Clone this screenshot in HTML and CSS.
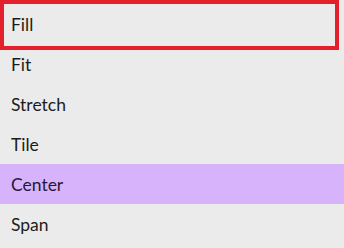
FILE: index.html
```html
<!DOCTYPE html>
<html>
<head>
<meta charset="utf-8">
<link rel="stylesheet" href="styles.css">
</head>
<body>
<ul class="menu">
  <li class="item focused">Fill</li>
  <li class="item">Fit</li>
  <li class="item">Stretch</li>
  <li class="item">Tile</li>
  <li class="item selected">Center</li>
  <li class="item">Span</li>
</ul>
</body>
</html>
```
FILE: styles.css
```css
html, body {
  margin: 0;
  padding: 0;
  background: #ebebeb;
  width: 344px;
  height: 248px;
  overflow: hidden;
}
.menu {
  list-style: none;
  margin: 0;
  padding: 4px 0 0 0;
  display: flex;
  flex-direction: column;
}
.item {
  position: relative;
  height: 40px;
  box-sizing: border-box;
  padding: 0 0 0 11px;
  display: flex;
  align-items: center;
  font-family: Lato, "Noto Sans", sans-serif;
  font-size: 17.5px;
  color: #1c1c1c;
}
.focused::after {
  content: "";
  position: absolute;
  top: -4px;
  left: 0;
  width: 339px;
  height: 50px;
  box-sizing: border-box;
  border: 4px solid #e3202b;
}
.selected {
  background: #d7b3fb;
  color: #26183a;
}
```
